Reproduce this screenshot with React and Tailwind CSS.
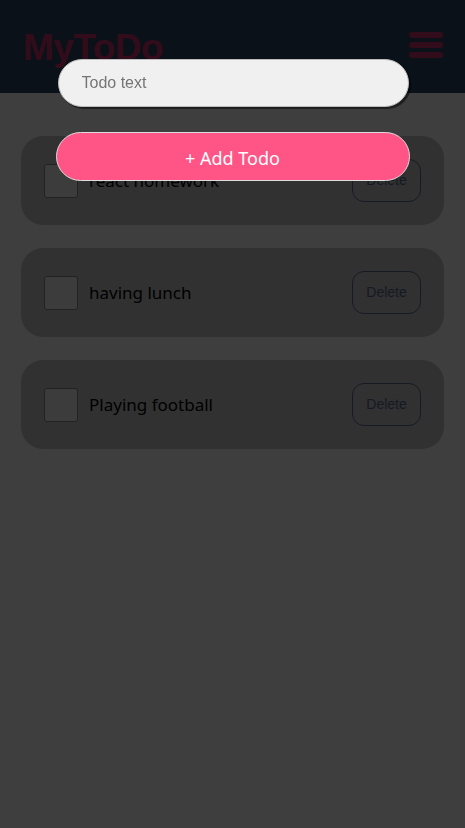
import { useState } from "react";

// daftar todo awal
const initialTodos = [
  { id: 1, text: "react homework", done: false },
  { id: 2, text: "having lunch", done: false },
  { id: 3, text: "Playing football", done: false },
];

// ikon hamburger sederhana
const Burger = () => (
  <div className="flex flex-col gap-[4px]">
    <span className="block h-[6px] w-[34px] rounded-full bg-[#c8306a]" />
    <span className="block h-[6px] w-[34px] rounded-full bg-[#c8306a]" />
    <span className="block h-[6px] w-[34px] rounded-full bg-[#c8306a]" />
  </div>
);

const TodoItem = ({ todo, onToggle, onDelete }) => (
  <li className="flex items-center h-[89px] rounded-[22px] bg-[#c2c2c2] pl-[23px] pr-[23px]">
    <button
      onClick={() => onToggle(todo.id)}
      className="w-[34px] h-[34px] rounded-[3px] border border-[#888] bg-[#f0f0f0] shrink-0"
      aria-label="toggle"
    />
    <span className="ml-[11px] flex-1 text-[17px] text-black font-['Noto_Sans',sans-serif]">
      {todo.text}
    </span>
    <button
      onClick={() => onDelete(todo.id)}
      className="w-[69px] h-[43px] rounded-[12px] border border-[#56688e] text-[14px] text-[#56688e] font-['Liberation_Sans',Arial,sans-serif]"
    >
      Delete
    </button>
  </li>
);

export default function App() {
  const [todos, setTodos] = useState(initialTodos);
  const [text, setText] = useState("");
  const [open, setOpen] = useState(true);

  const toggle = (id) =>
    setTodos(todos.map((t) => (t.id === id ? { ...t, done: !t.done } : t)));
  const remove = (id) => setTodos(todos.filter((t) => t.id !== id));
  const add = () => {
    if (!text.trim()) return;
    setTodos([...todos, { id: Date.now(), text, done: false }]);
    setText("");
    setOpen(false);
  };

  return (
    <div className="relative min-h-[828px] bg-[#f8f8f8] font-['Liberation_Sans',Arial,sans-serif]">
      {/* header */}
      <header className="flex items-center justify-between h-[93px] bg-[#2c4460] pl-[23px] pr-[22px] pb-[3px]">
        <h1 className="text-[37px] font-bold text-[#c8306a] tracking-[-0.5px] pt-[6px]">MyToDo</h1>
        <button onClick={() => setOpen(true)} className="pb-[1px]">
          <Burger />
        </button>
      </header>

      {/* daftar todo */}
      <ul className="flex flex-col gap-[23px] px-[21px] pt-[43px]">
        {todos.map((t) => (
          <TodoItem key={t.id} todo={t} onToggle={toggle} onDelete={remove} />
        ))}
      </ul>

      {/* modal tambah todo */}
      {open && (
        <div className="fixed inset-0 bg-black/75" onClick={() => setOpen(false)}>
          <div
            className="w-[354px] mx-auto mt-[59px] flex flex-col"
            onClick={(e) => e.stopPropagation()}
          >
            <input
              value={text}
              onChange={(e) => setText(e.target.value)}
              placeholder="Todo text"
              className="ml-[2px] w-[351px] h-[48px] rounded-[24px] bg-[#f0f0f0] border border-[#bbb] shadow-[2px_2px_1px_rgba(0,0,0,0.55)] pl-[23px] text-[16px] text-[#333] placeholder:text-[#757575] outline-none font-['Liberation_Sans',Arial,sans-serif]"
            />
            <button
              onClick={add}
              className="mt-[25px] h-[49px] rounded-[25px] bg-[#ff5586] border border-[#ddd] pt-[3px] text-white text-[18px] font-['Noto_Sans',sans-serif]"
            >
              + Add Todo
            </button>
          </div>
        </div>
      )}
    </div>
  );
}
